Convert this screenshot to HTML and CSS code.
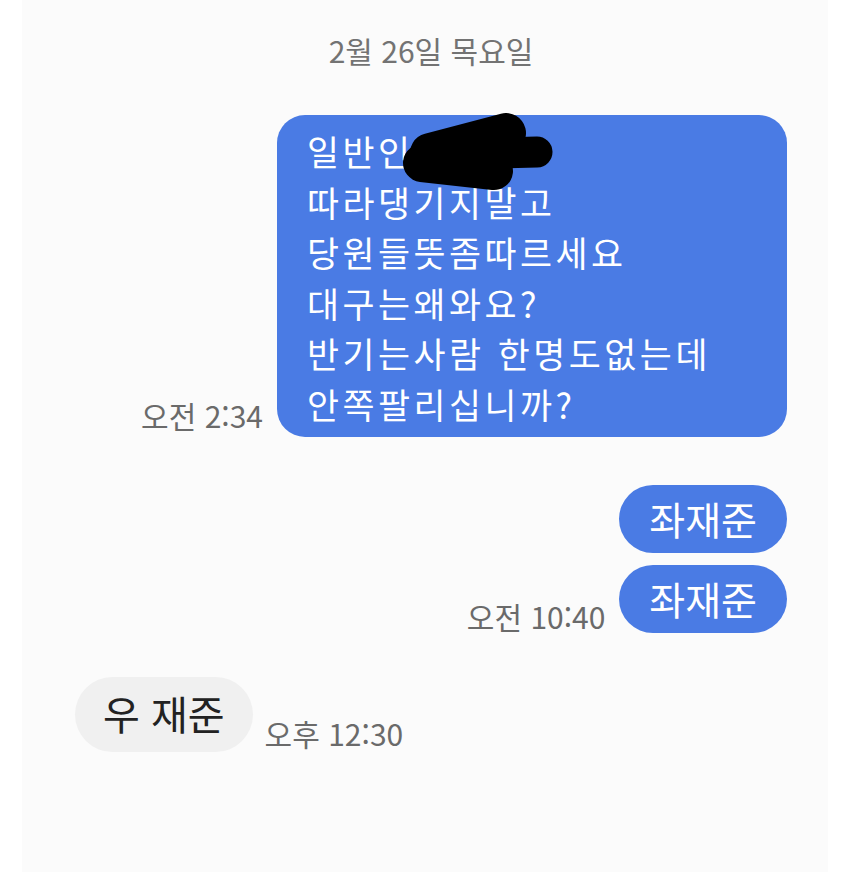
FILE: index.html
```html
<!DOCTYPE html>
<html lang="ko">
<head>
    <meta charset="UTF-8">
    <title>메시지</title>
    <link rel="stylesheet" href="styles.css">
</head>
<body>
    <div class="chat">
        <div class="date">2월 26일 목요일</div>

        <div class="row out first">
            <span class="time">오전 2:34</span>
            <div class="bubble blue big">
                <div class="line">일반인</div>
                <div class="line">따라댕기지말고</div>
                <div class="line">당원들뜻좀따르세요</div>
                <div class="line">대구는왜와요?</div>
                <div class="line">반기는사람 한명도없는데</div>
                <div class="line">안쪽팔리십니까?</div>
                <!-- redacted name -->
                <svg class="scribble" width="152" height="80" viewBox="0 0 152 80">
                    <g stroke="#000" stroke-linecap="round" fill="none">
                        <line x1="28" y1="40" x2="104" y2="20" stroke-width="40"/>
                        <line x1="20" y1="50" x2="92" y2="58" stroke-width="38"/>
                        <line x1="100" y1="40" x2="135" y2="39" stroke-width="31"/>
                    </g>
                </svg>
            </div>
        </div>

        <div class="row out second">
            <div class="bubble blue pill">좌재준</div>
        </div>

        <div class="row out third">
            <span class="time t-pill">오전 10:40</span>
            <div class="bubble blue pill">좌재준</div>
        </div>

        <div class="row in">
            <div class="bubble grey pill">우 재준</div>
            <span class="time t-in">오후 12:30</span>
        </div>
    </div>
</body>
</html>
```

FILE: styles.css
```css
body {
    margin: 0;
    background: #ffffff;
    font-family: "Noto Sans CJK KR", "Noto Sans", sans-serif;
}
.chat {
    margin: 0 22px;
    min-height: 872px;
    background: #fbfbfb;
    padding: 0 41px 0 53px;
}
.date {
    padding-top: 33px;
    text-align: center;
    font-size: 30px;
    line-height: 34px;
    color: #737373;
}
.row {
    display: flex;
    align-items: flex-end;
    gap: 14px;
}
.row.out {
    justify-content: flex-end;
}
.row.first {
    margin-top: 48px;
}
.row.second {
    margin-top: 48px;
}
.row.third {
    margin-top: 12px;
}
.row.in {
    margin-top: 44px;
    gap: 12px;
}
.time {
    font-size: 30px;
    line-height: 34px;
    color: #6a6a6a;
    margin-bottom: 5px;
    white-space: nowrap;
}
.time.t-pill {
    margin-bottom: 0;
}
.time.t-in {
    margin-bottom: 2px;
}
.bubble {
    font-size: 40px;
    white-space: nowrap;
}
.blue {
    background: #4a7be4;
    color: #ffffff;
}
.grey {
    background: #f0f0f0;
    color: #222222;
}
.big {
    position: relative;
    width: 450px;
    padding: 11px 30px 8px;
    border-radius: 28px;
}
.line {
    font-size: 34.8px;
    line-height: 50.5px;
    letter-spacing: 3.5px;
}
.pill {
    height: 68px;
    line-height: 66px;
    padding: 0 30px;
    border-radius: 34px;
    font-size: 39px;
}
.grey.pill {
    height: 75px;
    line-height: 73px;
    padding: 0 28px;
    border-radius: 38px;
    font-size: 40px;
}
.scribble {
    position: absolute;
    left: 125px;
    top: -2px;
}
```
